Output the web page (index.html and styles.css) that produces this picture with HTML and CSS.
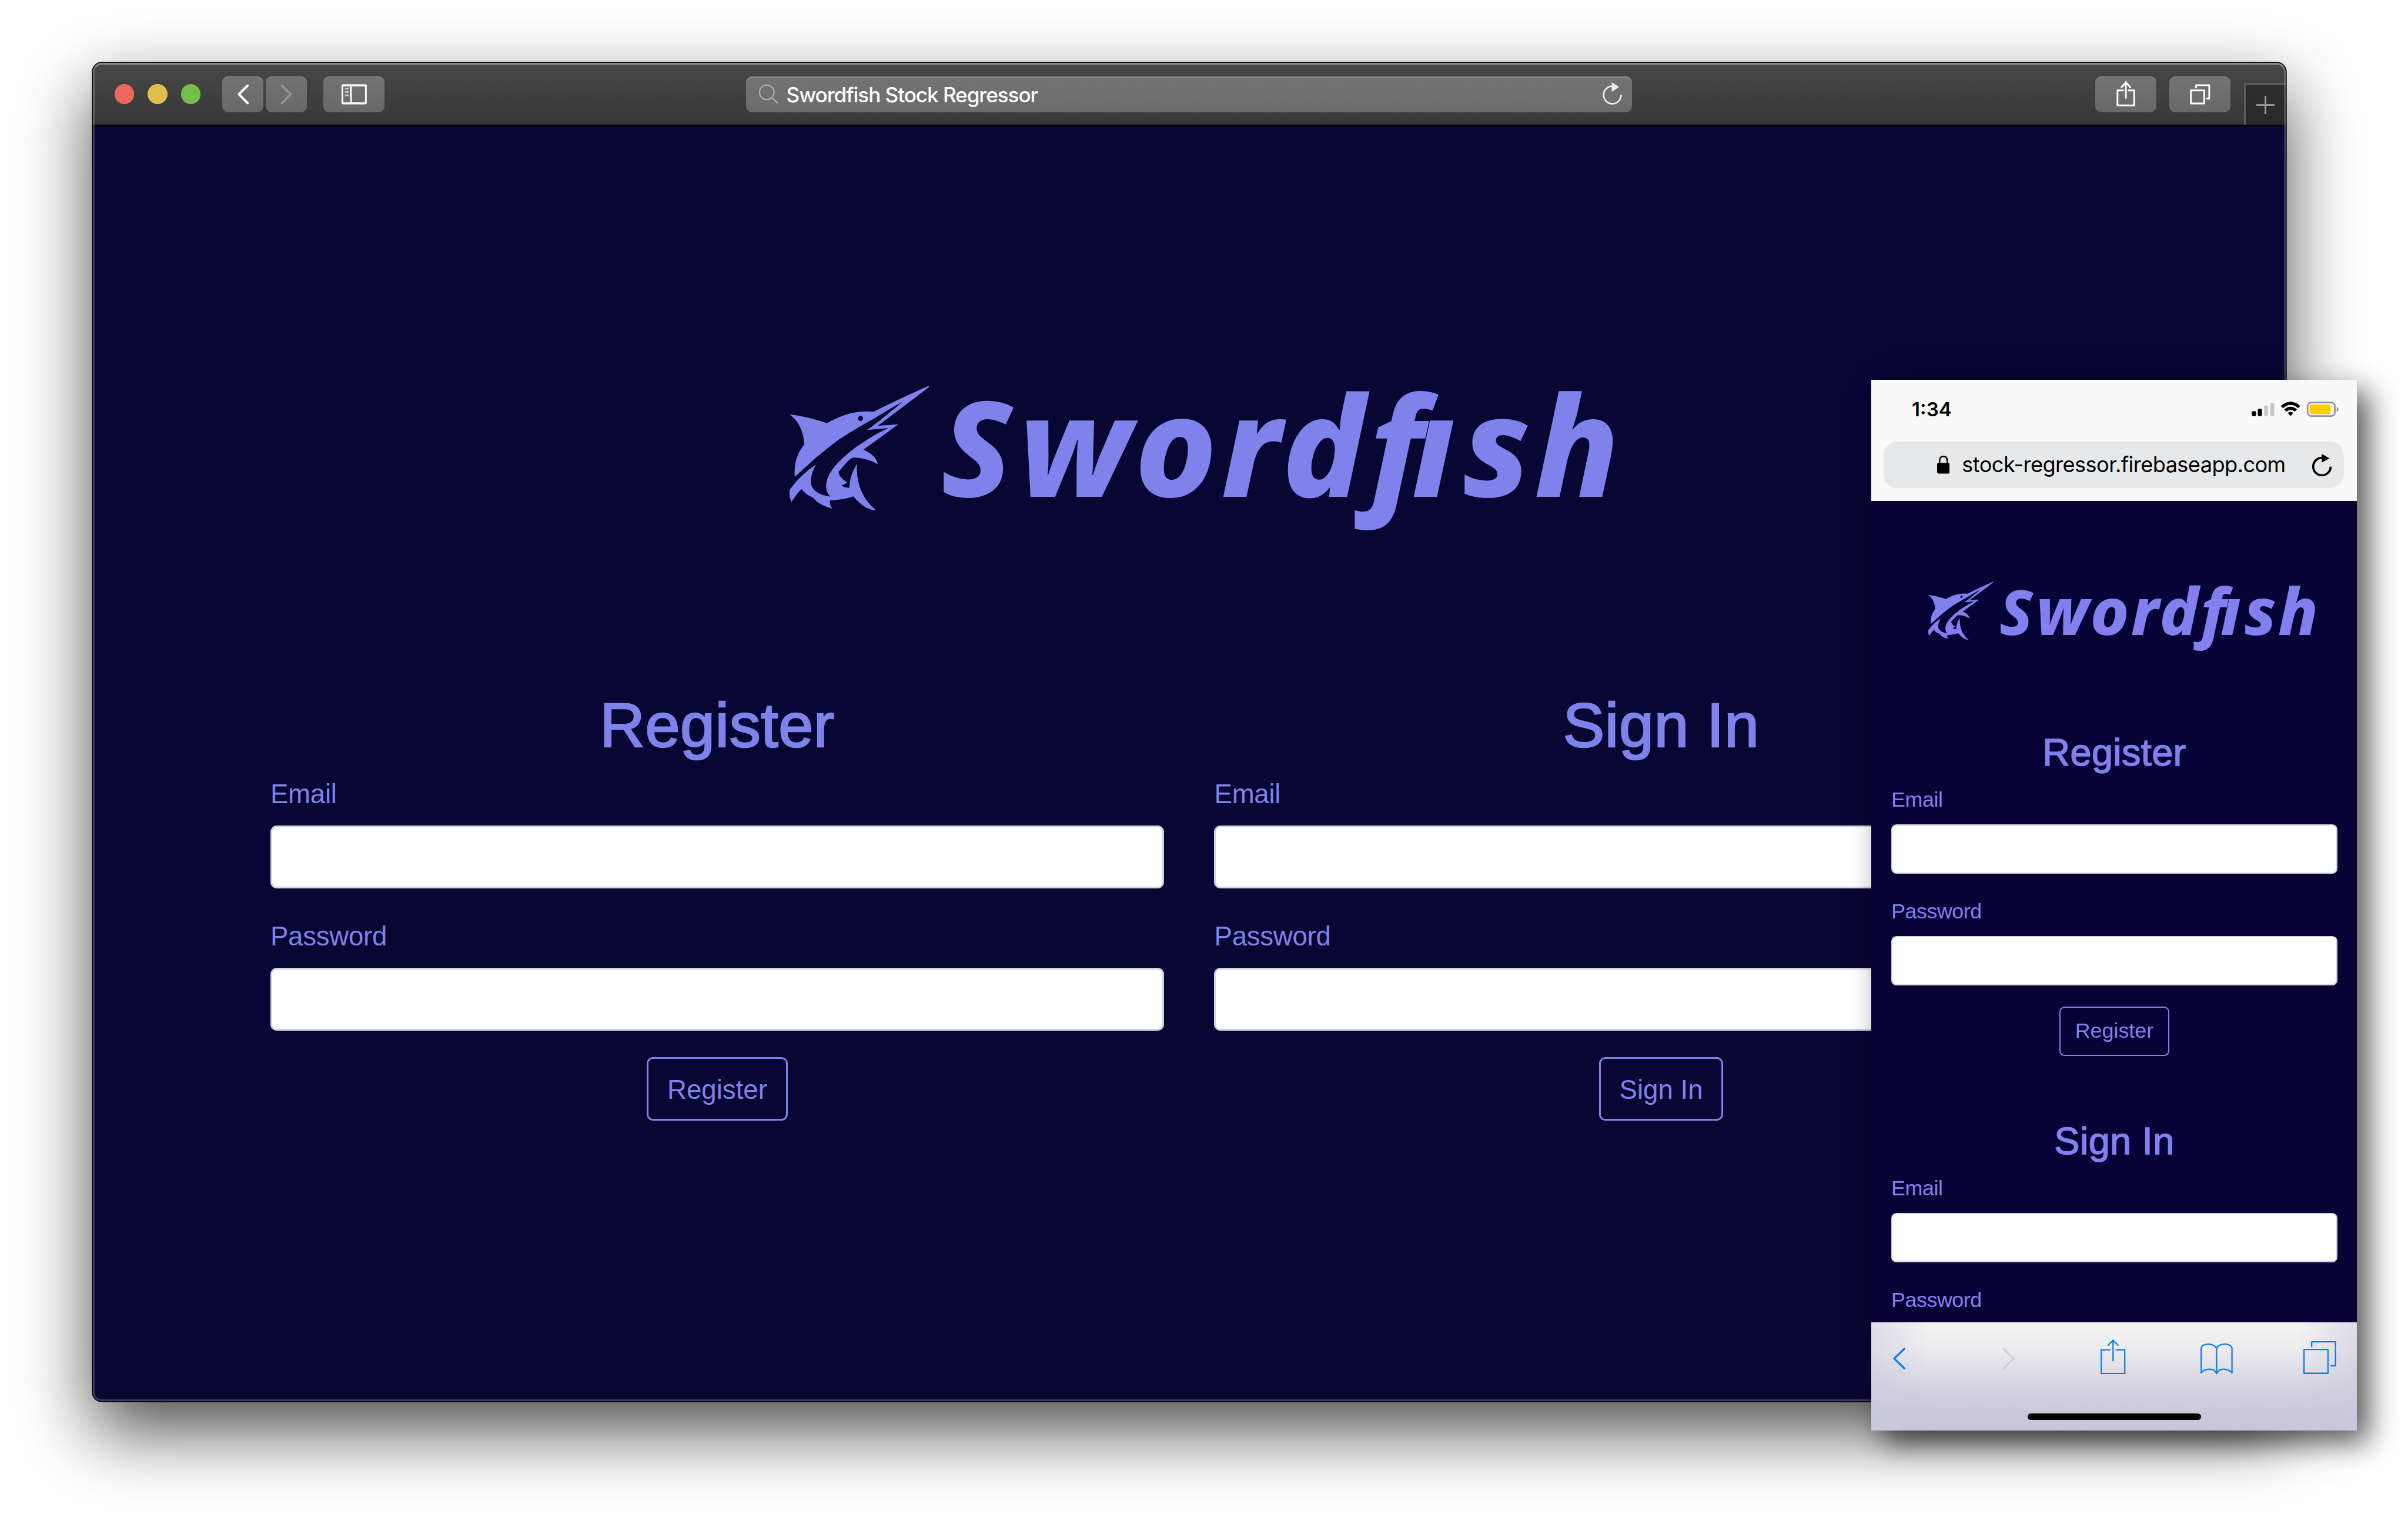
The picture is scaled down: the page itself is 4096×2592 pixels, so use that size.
FILE: index.html
```html
<!DOCTYPE html>
<html lang="en">
<head>
<meta charset="utf-8">
<title>Swordfish Stock Regressor</title>
<link rel="stylesheet" href="styles.css">
</head>
<body>
<svg class="defs" aria-hidden="true">
  <symbol id="fish" viewBox="80 62 1054 942">
    <path fill-rule="evenodd" d="M80 278Q220 294 362 345Q450 295 540 271Q620 250 715 258Q930 150 1134 62Q1135 70 1128 76L870 272L745 365L903 353L638 545Q735 590 747 655Q650 603 560 605Q535 615 510 642L450 712Q450 748 515 793Q500 808 472 812Q490 833 532 832Q535 730 590 652Q575 870 733 1003Q650 1003 562 898Q480 925 385 928Q382 960 402 990Q295 960 258 905Q205 890 172 842Q145 862 95 940Q75 900 80 850Q165 730 280 658Q240 725 240 795Q255 880 390 900Q355 870 356 815Q360 735 440 650Q530 555 640 487Q740 420 828 382L667 396L760 326L935 183Q830 240 720 308Q530 415 450 470Q370 530 280 605L120 750Q105 610 192 505Q180 350 80 278ZM597 309a19 19 0 1 0 38 0a19 19 0 1 0-38 0Z"/>
  </symbol>
</svg>

<main class="window">
  <header class="titlebar">
    <div class="lights"><i class="light red"></i><i class="light yellow"></i><i class="light green"></i></div>
    <div class="nav">
      <button class="tool nav-btn"><svg viewBox="0 0 104 91"><path class="w7" d="M64 23L42 45L64 67"/></svg></button>
      <button class="tool nav-btn"><svg viewBox="0 0 104 91"><path class="w7 dim" d="M41 23L63 45L41 67"/></svg></button>
    </div>
    <button class="tool wide"><svg viewBox="0 0 155 91"><rect class="w4" x="48" y="22" width="59" height="46" rx="2"/><path class="w4" d="M69.500 22V68M48 22.500H107M48 67.500H107"/><path class="dots" d="M54.500 29h9v4h-9zM54.500 37h9v4h-9zM54.500 45h9v5h-9z"/></svg></button>
    <div class="address">
      <svg class="glass" viewBox="0 0 54 54"><circle cx="22" cy="22" r="19"/><path d="M36 36L51 51"/></svg>
      <span class="address-text">Swordfish Stock Regressor</span>
      <svg class="reload" viewBox="0 0 50 56"><path class="arc" d="M26 10A22 22 0 1 0 46.500 31"/><path class="head" d="M23 0L42 12L23 24Z"/></svg>
    </div>
    <button class="tool share"><svg viewBox="0 0 154 91"><path class="w4" d="M70 35H56V73H98V35H84M77 54V14M66 27L77 15L88 27"/></svg></button>
    <button class="tool tabs"><svg viewBox="0 0 154 91"><path class="w4" d="M54.500 35H88V68H54.500ZM67.500 28V22H100.500V56H95"/></svg></button>
    <div class="new-tab"><svg viewBox="0 0 46 46"><path d="M0 23H46M23 0V46"/></svg></div>
  </header>
  <div class="page desktop">
    <div class="logo"><svg class="fish"><use href="#fish"/></svg><h1 class="brand"><span class="cap">S</span>word<span class="eff">f</span><span class="eye">i</span>sh</h1></div>
    <div class="forms">
      <form class="form"><h2>Register</h2><label>Email</label><div class="input"></div><label>Password</label><div class="input"></div><button type="button" class="submit">Register</button></form>
      <form class="form"><h2>Sign In</h2><label>Email</label><div class="input"></div><label>Password</label><div class="input"></div><button type="button" class="submit">Sign In</button></form>
    </div>
  </div>
</main>

<section class="phone">
  <header class="phone-head">
    <div class="status">
      <span class="time">1:34</span>
      <svg class="indicators" viewBox="5665 1010 220 39">
        <rect x="5665.500" y="1034" width="10.500" height="12.700" rx="3"/><rect x="5680.500" y="1028" width="10.500" height="18.700" rx="3"/>
        <rect class="off" x="5696.500" y="1020" width="10" height="26.700" rx="3"/><rect class="off" x="5712" y="1013" width="10" height="33.700" rx="3"/>
        <path d="M5738.500 1021Q5763 1000 5787.500 1021L5782 1026.500Q5763 1010.500 5744 1026.500ZM5747 1029.500Q5763 1016.500 5779 1029.500L5773.500 1035Q5763 1026.500 5752.500 1035ZM5756 1038.500Q5763 1032.500 5770 1038.500L5763 1046.500Z"/>
        <rect class="shell" x="5806" y="1012.500" width="68.500" height="34" rx="9"/><rect class="charge" x="5811" y="1017.500" width="52.500" height="24" rx="4"/><path class="nub" d="M5879 1023.500Q5883.500 1026 5883.500 1029.500T5879 1036Z"/>
      </svg>
    </div>
    <div class="pill">
      <svg class="lock" viewBox="0 0 32 45"><rect y="18" width="32" height="27" rx="4"/><path d="M6.500 20V12Q6.500 1.800 16 1.800T25.500 12V20"/></svg>
      <span class="pill-text">stock-regressor.firebaseapp.com</span>
      <svg class="pill-reload" viewBox="0 0 50 56"><path class="arc" d="M26 10A22 22 0 1 0 46.500 32"/><path class="head" d="M24 0L44 11L24 22Z"/></svg>
    </div>
  </header>
  <div class="page mobile">
    <div class="logo"><svg class="fish"><use href="#fish"/></svg><h1 class="brand"><span class="cap">S</span>word<span class="eff">f</span><span class="eye">i</span>sh</h1></div>
    <div class="forms">
      <form class="form"><h2>Register</h2><label>Email</label><div class="input"></div><label>Password</label><div class="input"></div><button type="button" class="submit">Register</button></form>
      <form class="form"><h2>Sign In</h2><label>Email</label><div class="input"></div><label>Password</label></form>
    </div>
  </div>
  <footer class="toolbar">
    <div class="toolbar-icons">
      <svg class="i-back" viewBox="0 0 33 58"><path d="M30 3L3 29L30 55"/></svg>
      <svg class="i-fwd" viewBox="0 0 33 58"><path d="M3 3L30 29L3 55"/></svg>
      <svg class="i-share" viewBox="0 0 63 88"><path d="M25 26.500H1.700V86H61V26.500H38M31.500 55V2M18 16L31.500 2L45 16"/></svg>
      <svg class="i-book" viewBox="0 0 81 78"><path d="M40.500 12V76M40.500 14C36 -2 6 -2 1.700 11V74C12 62 34 60 40.500 76C47 60 69 62 79.300 74V11C75 -2 45 -2 40.500 14"/></svg>
      <svg class="i-tabs" viewBox="0 0 83 83"><path d="M1.700 21H62V81H1.700ZM21 15V1.700H81V62H68"/></svg>
    </div>
    <div class="home"></div>
  </footer>
</section>
</body>
</html>
```
FILE: styles.css
```css
/* 1rem = 100 design units */
html { font-size: 67.602px; }
* { box-sizing: border-box; }
body { margin: 0; width: 100vw; height: 100vh; overflow: hidden; background: #fff; position: relative; font-family: "Liberation Sans", Arial, sans-serif; }
svg { display: block; flex: none; fill: none; }
button { font: inherit; padding: 0; margin: 0; border: 0; background: none; }
h1, h2 { margin: 0; }
.defs { position: absolute; width: 0; height: 0; }

/* Browser window */
.window { position: absolute; left: 2.34rem; top: 1.58rem; width: 55.17rem; height: 33.67rem; display: flex; flex-direction: column; border-radius: .22rem; background: #080633; box-shadow: 0 0 0 .025rem #060606, 0 .72rem 1.8rem rgba(0,0,0,.71); }
.window::after { content: ""; position: absolute; inset: 0; border-radius: .22rem; border: .045rem solid rgba(255,255,255,.2); border-top-color: rgba(255,255,255,.36); pointer-events: none; }
.titlebar { display: flex; align-items: flex-start; height: 1.59rem; padding: .34rem 0 0 .54rem; border-bottom: .04rem solid #060606; border-radius: .22rem .22rem 0 0; background: linear-gradient(#464846, #373837); box-shadow: inset 0 -.03rem #2b2c2b; }
.lights { display: flex; align-items: center; gap: .335rem; height: .9rem; }
.light { width: .5rem; height: .5rem; border-radius: 50%; }
.red { background: #ee675c; }
.yellow { background: #dfc04e; }
.green { background: #74bf49; }
.nav { display: flex; gap: .06rem; margin-left: .538rem; }
.tool { height: .91rem; border-radius: .16rem; background: linear-gradient(#727372, #676867); box-shadow: inset 0 .02rem #8a8b8a; }
.tool svg { width: 100%; height: 100%; }
.nav-btn { width: 1.037rem; }
.wide { width: 1.55rem; margin-left: .41rem; }
.w4 { stroke: #fff; stroke-width: 4.4; stroke-linecap: round; stroke-linejoin: round; }
.w7 { stroke: #fff; stroke-width: 6; stroke-linecap: round; stroke-linejoin: round; }
.dim { stroke: #929392; }
.dots { fill: #c6c6c6; }
.address { display: flex; align-items: center; width: 22.29rem; height: .91rem; margin-left: 9.095rem; padding: 0 .24rem 0 .3rem; border-radius: .16rem; background: linear-gradient(#737473, #6a6b6a); box-shadow: inset 0 .03rem #8a8b8a; color: #fff; }
.glass { width: .52rem; height: .54rem; stroke: #aeafae; stroke-width: 3.5; }
.address-text { flex: 1; margin-left: .19rem; font: 500 .52rem/.91rem Inter, sans-serif; letter-spacing: -.016rem; white-space: nowrap; padding-top: .05rem; }
.reload { width: .5rem; height: .56rem; margin-top: -.05rem; }
.reload .arc { stroke: #ececec; stroke-width: 4; }
.reload .head { fill: #ececec; }
.share { width: 1.54rem; margin-left: 11.655rem; }
.tabs { width: 1.54rem; margin-left: .33rem; }
.new-tab { display: grid; place-items: center; width: 1.04rem; height: 1.05rem; margin: .16rem 0 0 .34rem; border: solid #5d5e5d; border-width: .045rem 0 0 .045rem; background: linear-gradient(#2e2f2e, #272827); }
.new-tab svg { width: .46rem; height: .46rem; stroke: #939493; stroke-width: 4.5; margin: .03rem .03rem 0 0; }

/* Shared sign-in page */
.page { color: var(--ink); }
.logo { display: flex; align-items: flex-start; }
.fish { fill: var(--ink); }
.brand { font-family: "Noto Sans", sans-serif; font-weight: 760; font-style: italic; font-size: var(--brand); line-height: 1; letter-spacing: .028em; white-space: nowrap; display: flex; align-items: baseline; }
.cap { font-size: .95em; letter-spacing: .05em; }
.eff { margin-right: -.085em; }
/* the i joins the crossbar of the f, with the dot masked away */
.eye { padding: 0 .1em; margin: 0 -.072em 0 -.128em; -webkit-mask-image: linear-gradient(transparent 33%, #000 33%); mask-image: linear-gradient(transparent 33%, #000 33%); }
.form { display: flex; flex-direction: column; }
.form h2 { height: var(--title); font-size: var(--title); line-height: calc(var(--title) + var(--drop)); font-weight: 400; letter-spacing: .005em; text-align: center; margin-bottom: var(--title-gap); -webkit-text-stroke: .024em var(--ink); }
.form label { font-size: var(--text); line-height: calc(var(--label) + var(--drop)); height: var(--label); letter-spacing: var(--track); margin-bottom: var(--label-gap); }
.input { height: var(--field); border: var(--line) solid #ced4da; border-radius: var(--radius); background: #fff; }
.input + label { margin-top: var(--group-gap); }
.submit { align-self: center; height: var(--field); margin-top: var(--button-gap); padding: var(--push) var(--button-pad) 0; border: var(--line) solid var(--ink); border-radius: var(--radius); color: var(--ink); font-size: var(--text); }

.desktop { --ink: #7f82ea; --brand: 3.5rem; --title: 1.57rem; --title-gap: .63rem; --text: .675rem; --track: -.006em; --drop: .06rem; --push: .05rem; --label: .66rem; --label-gap: .48rem; --field: 1.585rem; --line: .045rem; --radius: .16rem; --group-gap: .855rem; --button-gap: .67rem; --button-pad: .47rem; padding: 6.537rem 4.47rem 0 4.463rem; }
.desktop .logo { height: 3.63rem; margin: 0 0 4.093rem 13.064rem; }
.desktop .fish { width: 3.513rem; height: 3.14rem; }
.desktop .brand { margin: -.315rem 0 0 .3rem; }
.desktop .forms { display: grid; grid-template-columns: 1fr 1fr; gap: 1.264rem; }

/* Phone */
.phone { position: absolute; left: 47.09rem; top: 9.55rem; width: 12.212rem; height: 26.44rem; display: flex; flex-direction: column; background: #080337; box-shadow: .3rem .3rem .7rem rgba(0,0,0,.66); color: #000; }
.phone-head { height: 3.06rem; flex: none; padding: 0 .32rem 0 .307rem; background: #f9f9f9; }
.status { display: flex; justify-content: space-between; align-items: center; height: 1.56rem; padding: 0 .12rem 0 .71rem; }
.time { font: 600 .49rem/1 Inter, sans-serif; padding-bottom: .04rem; }
.indicators { width: 2.2rem; height: .39rem; margin-top: -.07rem; fill: #000; }
.off { fill: #c8c8c8; }
.shell { fill: none; stroke: #939393; stroke-width: 4; }
.charge { fill: #ffcc00; }
.nub { fill: #939393; }
.pill { display: flex; align-items: center; height: 1.17rem; padding: 0 .3rem 0 1.34rem; border-radius: .34rem; background: #e7e8ea; }
.lock { width: .32rem; height: .45rem; fill: #000; }
.lock path { fill: none; stroke: #000; stroke-width: 3.5; }
.pill-text { flex: 1; margin-left: .31rem; font: 400 .535rem/1.17rem Inter, sans-serif; letter-spacing: -.0085rem; white-space: nowrap; }
.pill-reload { width: .5rem; height: .56rem; }
.pill-reload .arc { stroke: #000; stroke-width: 5.5; }
.pill-reload .head { fill: #000; }

.mobile { --ink: #8280ee; --brand: 1.644rem; --title: .96rem; --title-gap: .443rem; --text: .53rem; --track: -.012em; --drop: .04rem; --push: 0; --label: .53rem; --label-gap: .38rem; --field: 1.24rem; --line: .033rem; --radius: .13rem; --group-gap: .66rem; --button-gap: .525rem; --button-pad: .367rem; flex: 1; min-height: 0; overflow: hidden; padding: 2.02rem .49rem 0 .498rem; }
.mobile .logo { height: 1.47rem; margin: 0 0 2.334rem .936rem; }
.mobile .fish { width: 1.642rem; height: 1.47rem; }
.mobile .brand { margin: -.1rem 0 0 .144rem; }
.mobile .forms { display: grid; gap: 1.645rem; }

.toolbar { flex: none; height: 2.72rem; display: flex; flex-direction: column; align-items: center; background: linear-gradient(90deg, rgba(203,201,221,.55), rgba(203,201,221,0) 12%, rgba(203,201,221,0) 88%, rgba(203,201,221,.55)), linear-gradient(#f4f4f5, #ececef 25%, #d5d3e0 60%, #cac8da 82%, #c8c6d9); }
.toolbar-icons { display: flex; align-items: flex-start; width: 100%; height: 2.29rem; padding: .42rem 0 0 .546rem; }
.toolbar svg { stroke: #0a7cf5; stroke-width: 3.4; stroke-linejoin: round; }
.i-back, .i-fwd { width: .33rem; height: .58rem; margin-top: .2rem; }
.toolbar .i-back { stroke-width: 5; }
.toolbar .i-fwd { stroke: #cfced5; stroke-width: 4.5; margin-left: 2.4rem; }
.i-share { width: .63rem; height: .88rem; margin-left: 2.16rem; }
.i-book { width: .81rem; height: .78rem; margin: .11rem 0 0 1.88rem; }
.i-tabs { width: .83rem; height: .83rem; margin: .05rem 0 0 1.78rem; }
.home { width: 4.36rem; height: .17rem; border-radius: .085rem; background: #000; }
```
